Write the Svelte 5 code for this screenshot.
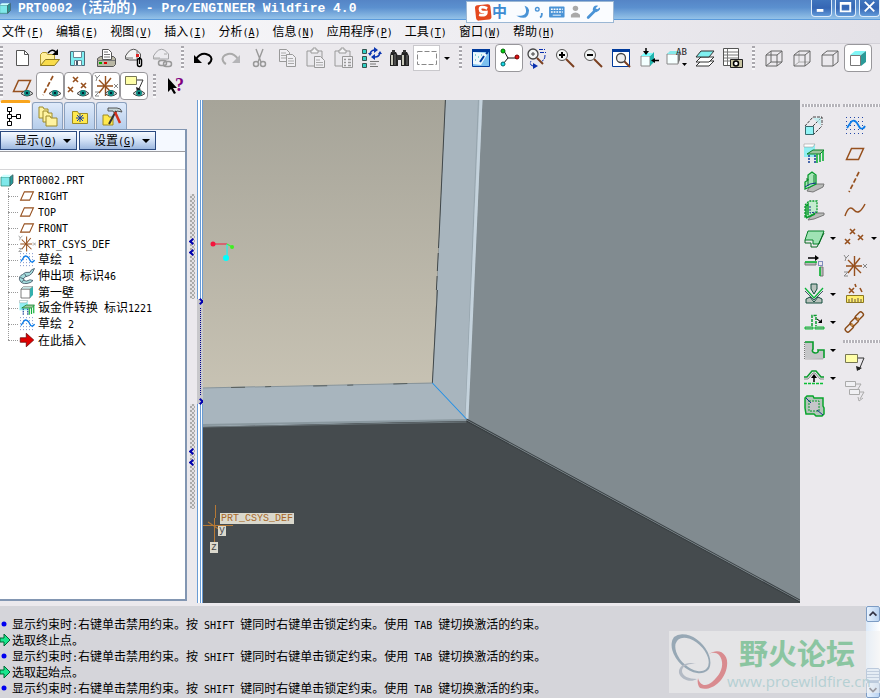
<script lang="ts">
	const eye =
		'<path d="M11 19.500q6-6 12 0q-6 5-12 0z" fill="#cfd3d3" stroke="#444"/><circle cx="17" cy="19" r="3" fill="#0b8a80"/><rect x="16" y="18" width="2" height="2" fill="#023"/>';
	const axes =
		'<g stroke="#96501e" stroke-width="1.400" fill="none"><path d="M3 12h16M11.500 2v20M5 6l13 13M17 4L5 19"/></g><g stroke="#888" fill="none"><path d="M1 1l2 3 3-3M3 4L2 7M20 10l4 4M24 10l-4 4M1 18h4l-4 4h4"/></g>';
	const points =
		'<g stroke="#96501e" stroke-width="1.600"><path d="M7 3l5 5M12 3L7 8M15 9l5 5M20 9l-5 5M2 13l5 5M7 13l-5 5"/></g>';
	const lens =
		'<path d="M13 13l8 8" stroke="#7b3f20" stroke-width="2"/><circle cx="9" cy="9" r="5.500" fill="#f4f6f6" stroke="#555"/>';
	const clipboard =
		'<path d="M4 5h15v15H4z" fill="#e9e8ec" stroke="#999"/><path d="M8 7V4h2V2h3v2h2v3z" fill="#f4f4f6" stroke="#999"/>';
	const cubeEdges = 'M4 9h11v11H4zM9 5h11v11l-5 4M4 9l5-4M15 9l5-4';

	const icons: Record<string, string> = {
		new: '<path d="M6.500 4.500h8l4 4v11h-12z" fill="#fff" stroke="#555"/><path d="M14.500 4.500v4h4" fill="none" stroke="#555"/>',
		open: '<path d="M2.500 19.500v-11l2-2h4l1 2h7v5" fill="#ffef9a" stroke="#b39a2c"/><path d="M2.500 19.500l5-6h14l-5 6z" fill="#f9dc4a" stroke="#8d7a20"/><path d="M10 7q4-5 8-1" fill="none" stroke="#000" stroke-width="1.400"/><path d="M20 3v6h-6z"/>',
		save: '<path d="M4.500 5.500h14v14h-14z" fill="#7ff0f4" stroke="#4d6a78"/><path d="M7.500 5.500h8v6h-8zM8.500 14.500h7v5h-7z" fill="#fff" stroke="#6a8694"/><path d="M10 15h2v4h-2z" fill="#456"/>',
		print: '<path d="M3.500 12.500l3-2h13l2 2v6l-2 2h-16z" fill="#b9b7a5" stroke="#555"/><path d="M8.500 3.500h6l3 3v7h-9z" fill="#fff" stroke="#555"/><path d="M10 6h4M10 8.500h6M10 11h6M3 14.500h18" stroke="#777"/><path d="M5 16h3v2H5z" fill="#0a0"/><path d="M10 16h3v2h-3z" fill="#d00"/>',
		mail: '<path d="M3.500 13v-3q5-9 11-6l4 4v6h-11z" fill="#f3f3f3" stroke="#555"/><path d="M3 12h8M15 5v9" stroke="#777"/><path d="M14 8h3v3h-3z" fill="#d22"/><rect x="15.500" y="12.500" width="4" height="8" rx="2" fill="#fff" stroke="#000" stroke-width="1.500"/><path d="M17.500 11v7" stroke="#000"/>',
		mailLink: '<path d="M3.500 13v-3q5-9 11-6l4 4v5h-11z" fill="#ecebef" stroke="#a5a5a8"/><path d="M3 12h7M14 8h3" stroke="#aaa"/><rect x="8.500" y="14.500" width="8" height="5" rx="2.500" fill="none" stroke="#999" stroke-width="1.500"/><rect x="13.500" y="15.500" width="8" height="5" rx="2.500" fill="none" stroke="#999" stroke-width="1.500"/>',
		undo: '<path d="M5 13q4-6 10-5q7 2 5 7q-1 2-3 3" fill="none" stroke="#000" stroke-width="2"/><path d="M3 9v8h8z"/>',
		redo: '<path d="M19 13q-4-6-10-5q-7 2-5 7q1 2 3 3" fill="none" stroke="#aaa" stroke-width="2"/><path d="M21 9v8h-8z" fill="#b5b5b8"/>',
		cut: '<path d="M9 3l5 13M16 3l-5 13" stroke="#999" stroke-width="1.400"/><circle cx="9" cy="18" r="2.500" fill="none" stroke="#999" stroke-width="1.500"/><circle cx="16" cy="18" r="2.500" fill="none" stroke="#999" stroke-width="1.500"/>',
		copy: '<path d="M4.500 3.500h7l3 3v9h-10z" fill="#f0eff3" stroke="#999"/><path d="M6 7h5M6 9.500h5M6 12h5" stroke="#aaa"/><path d="M11.500 8.500h6l3 3v9h-9z" fill="#f0eff3" stroke="#999"/><path d="M13 12.500h5M13 15h6M13 17.500h6" stroke="#aaa"/>',
		paste: clipboard + '<path d="M11.500 10.500h6l4 4v7h-10z" fill="#f0eff3" stroke="#999"/><path d="M13 14h4M13 16.500h7M13 19h7" stroke="#aaa"/>',
		pasteSpecial: clipboard + '<path d="M11.500 10.500h10v11h-10z" fill="#f0eff3" stroke="#999"/><path d="M13 13.500h2M17 13.500h3M13 16.500h2M17 16.500h3M13 19.500h2M17 19.500h3" stroke="#999" stroke-width="1.500"/>',
		regen: '<g fill="#30cfc4" stroke="#35524f"><path d="M3.500 3.500h4v4h-4zM3.500 10.500h4v4h-4zM3.500 17.500h4v4h-4z"/></g><path d="M11 8q1-4 5-4M21 7q-1 4-5 4" fill="none" stroke="#0a35b0" stroke-width="1.500"/><path d="M15 1l4 3-4 3zM16 8l-4 3 4 3zM9 7h4l-2 3zM19 8l2-3 2 3z" fill="#0a35b0"/><path d="M11 15.500h9M11 18h6M11 20.500h8" stroke="#777"/>',
		find: '<path d="M4 6h5l2 4v10H3V10zM15 6h5l2 4v10h-8V10z" fill="#222"/><path d="M5 4h3v3H5zM16 4h3v3h-3zM10 9h5v5h-5z" fill="#333"/><path d="M5 9v10M16 9v10" stroke="#c9c9bb" stroke-width="2"/><path d="M8 8v11M20 9v10" stroke="#777"/>',
		selectBox: '<path d="M2.500 5.500h19v13h-19z" fill="none" stroke="#888" stroke-dasharray="5 2"/>',
		repaint: '<path d="M3.500 3.500h17v17h-17z" fill="#7cc0ef" stroke="#003b9c"/><path d="M3 3h18v3H3z" fill="#003b9c"/><path d="M4 6l15 1-7 12-8-1z" fill="#eef8fd"/><path d="M15 10l-4 6M17 8l2-2" stroke="#003b9c" stroke-width="2"/><path d="M6 9h1M9 11h1M6 14h1M12 9h1" stroke="#2aa"/>',
		spin: '<path d="M7 5l4 7h9M11 12l-5 6" stroke="#111" fill="none"/><circle cx="6" cy="5" r="2" fill="#0c1" stroke="#060"/><circle cx="20" cy="11" r="2" fill="#e01010" stroke="#700"/><circle cx="6" cy="18" r="2" fill="#18d8e8" stroke="#066"/>',
		orient: '<path d="M12 12l6 6" stroke="#7b3f20" stroke-width="2"/><circle cx="8" cy="8" r="5" fill="#f4f6f6" stroke="#444" stroke-width="1.300"/><path d="M6 8h4M8 6v4" stroke="#444"/><path d="M14 3.500h6M15 6.500h6M20 9q0 5-3 6M8 20q-4-1-2-5" stroke="#0a2fae" fill="none" stroke-dasharray="4 1"/><path d="M8 17l5 3-5 3z" fill="#0a2fae"/>',
		zoomIn: lens + '<path d="M6 9h6M9 6v6" stroke="#000" stroke-width="2"/>',
		zoomOut: lens + '<path d="M6 9h6" stroke="#000" stroke-width="2"/>',
		refit: '<path d="M3.500 3.500h17v17h-17z" fill="#fff" stroke="#003b9c"/><path d="M3 3h18v3H3z" fill="#003b9c"/><path d="M15 15l6 6" stroke="#7b3f20" stroke-width="2"/><circle cx="12" cy="12" r="4.500" fill="#eee" stroke="#444" stroke-width="1.300"/>',
		reorient: '<path d="M4 10h9v10H4z" fill="#f3ffff" stroke="#888"/><path d="M13 10l4-4v10l-4 4z" fill="#21b3ad"/><path d="M4 10l3-3h9l-3 3z" fill="#7ff"/><path d="M9 2v6M22 14.500h-6" stroke="#000" stroke-width="1.500"/><path d="M6 5h6L9 9zM18 12v5l-4-2.500z"/>',
		views: '<path d="M2 8h11v10H2z" fill="#f6ffff" stroke="#888"/><path d="M2 8l3-3h10l-2 3z" fill="#84e8ea"/><path d="M13 8l2-3v9l-2 4z" fill="#777"/><text x="11" y="9" font-family="DejaVu Sans Mono, monospace" font-size="9" fill="#222">AB</text><path d="M17 17h5l-2.500 3z"/>',
		layers: '<g stroke="#333"><path d="M3 20l5-5h13l-5 5z" fill="#fff"/><path d="M3 16l5-5h13l-5 5z" fill="#fff"/><path d="M3 11l5-6h13l-5 6z" fill="#7ff0f0"/></g>',
		viewManager: '<path d="M2.500 2.500h15v17h-15z" fill="#fff" stroke="#555"/><path d="M3 6h14M3 9h14M3 12h14M3 15h14M6.500 3v16" stroke="#777"/><path d="M9.500 13.500h12v8h-12z" fill="#c9c5a3" stroke="#222"/><circle cx="15" cy="17.500" r="2.500" fill="#fff" stroke="#000" stroke-width="1.500"/>',
		wire: `<path d="${cubeEdges}M9 5v11h11M4 20l5-4" fill="none" stroke="#666"/>`,
		hidden: `<path d="M9 5v11h11M4 20l5-4" fill="none" stroke="#aaa"/><path d="${cubeEdges}" fill="none" stroke="#666"/>`,
		noHidden: `<path d="${cubeEdges}" fill="none" stroke="#666"/>`,
		shaded: '<path d="M4 9h11v11H4z" fill="#fff"/><path d="M4 9l5-4h11l-5 4z" fill="#7ff5f5"/><path d="M15 9l5-4v11l-5 4z" fill="#2b9a98"/><path d="M4.500 9.500h10v10h-10z" fill="none" stroke="#777"/>',
		planeEye: '<path d="M8.500 6.500h12l-5 11h-12z" fill="none" stroke="#96501e" stroke-width="1.500"/>' + eye,
		axisEye: '<path d="M15 2L5 21" stroke="#96501e" stroke-width="1.700" stroke-dasharray="5 2"/>' + eye,
		pointsEye: points + eye,
		csysEye: axes + eye,
		noteEye: '<path d="M3.500 2.500h11v8h-11z" fill="#ffffa8" stroke="#775"/><path d="M15 6h6l-5 11" fill="none" stroke="#333"/><path d="M14 13l1 5 4-3z" fill="#222"/>' + eye,
		help: '<path d="M5 4v14l3-3 3 5 2-1-3-5h4z"/><text x="12" y="17" font-family="Liberation Serif, serif" font-weight="bold" font-size="18" fill="#800080">?</text>',
		extrude: '<path d="M11 3h9v8M3 12l8-9M11 12l9-9M11 21l9-9" fill="none" stroke="#444" stroke-dasharray="3 1"/><path d="M11 4h8v8z" fill="#aee" opacity=".6"/><path d="M3.500 12.500h8v8h-8z" fill="#92f4f6" stroke="#35696c"/>',
		flange: '<path d="M2 2h11v13H2z" fill="#90eef2"/><path d="M2 2h11l-2 3H2z" fill="#fff" stroke="#888" stroke-width=".5"/><path d="M5 12l6-4h11l-4 4z" fill="#9cc49c" stroke="#087f27"/><path d="M18 12v8M21 9v10M15 12v9" stroke="#12b03a" stroke-width="1.600"/><path d="M7 13v9M13 13v9" stroke="#123c96" stroke-width="1.500" stroke-dasharray="2 1"/>',
		wall: '<path d="M7 18l6-4h9l-1 3-10 5-6-1z" fill="#b9bbb9" stroke="#777"/><path d="M3 19v-7l3-2V5l4-3 4 3v9l-6 3z" fill="#a8e6b8" stroke="#089a2d" stroke-width="1.300"/><path d="M5 10V8M6 16V9M12 5v9" stroke="#0a7a28"/><path d="M3 17l5-3 6-1" fill="none" stroke="#14328c"/>',
		wallDots: '<path d="M9 18l5-3h8v2l-10 4-6 1z" fill="#b9bbb9" stroke="#777"/><path d="M3 19V7l4-4h8v11l-7 4z" fill="#c4eccf" stroke="#089a2d" stroke-width="1.300" stroke-dasharray="2 1"/><path d="M4 19V8l2-2v11M4 20l9-4" fill="none" stroke="#089a2d" stroke-width="1.500"/><path d="M8 8v7l6-1" stroke="#14328c" fill="none" stroke-dasharray="2 1"/>',
		flat: '<path d="M6 5h16l-5 13h-6v-4H3z" fill="#9fe2b4" stroke="#07802a"/><path d="M3 14v3h6v4h6l7-14" fill="none" stroke="#06681f"/>',
		extend: '<path d="M6 4h9" stroke="#000" stroke-width="1.500"/><path d="M13 1l4 3-4 3z"/><path d="M3 8h11v3H3zM18 13h3v9h-3z" fill="#bbb" stroke="#777"/><path d="M3 8h12M18 13v9" stroke="#0abf35" stroke-width="1.500"/><path d="M16.500 7.500h4v4h-4z" fill="none" stroke="#14328c" stroke-dasharray="1 1"/>',
		bend: '<path d="M9 2v5l3 5 3-5V2zM4 21v-4l4-2 4 5 4-5 4 2v4z" fill="#b9c3bd" stroke="#124c3c"/><path d="M3 6l9 10 9-10" fill="none" stroke="#0bb43a" stroke-width="1.300"/><path d="M3 9l9 9 9-9" fill="none" stroke="#456"/>',
		unbend: '<path d="M3 17h8v2H3zM13 17h9v2h-9z" fill="#aaa" stroke="#0abf35"/><path d="M10 16V5.500h4V16" fill="none" stroke="#0a9a2d" stroke-width="1.500" stroke-dasharray="3 1"/><path d="M15 9l4 3" stroke="#000"/><path d="M20 9v4h-4z"/>',
		notch: '<path d="M3 20V4h8v7q-2 3 2 4q4 0 3-3h6v9" fill="#c5c6c8"/><path d="M3 4h8v7q-2 3 2 4q4 0 3-3h6v8" fill="none" stroke="#089c2b" stroke-width="1.600"/><path d="M2.500 4v17h19" fill="none" stroke="#777" stroke-dasharray="1 1"/>',
		form: '<path d="M2 11h3l5-6h4l5 6h3" fill="none" stroke="#0a9a2d" stroke-width="1.500"/><path d="M2 13h4l5-6h2l5 6h4" fill="none" stroke="#888"/><path d="M2 17.500h20" stroke="#0abf35" stroke-dasharray="3 1" stroke-width="1.500"/><path d="M12 16v-5" stroke="#000" stroke-width="1.500"/><path d="M9 12h6l-3-4z"/>',
		pattern: '<path d="M5 2h6l1 2h9v8l1 2v6l-2 2h-6l-2-2H4l-1-6V4z" fill="#b4c5bb" stroke="#08a52c" stroke-width="1.500"/><path d="M7 7h10v10H7z" fill="#c6c6ca" stroke="#089a2d" stroke-dasharray="2 1"/><path d="M4 4l5 5M15 16l6 5" stroke="#14328c"/>',
		sketch: '<g fill="none" stroke="#2247a8" stroke-dasharray="1 3"><path d="M3 3.500h19M3 7.500h19M3 11.500h19M3 15.500h19M3 19.500h19"/></g><path d="M4 14l4-6q3-3 6 1l3 5q3 2 5-2" fill="none" stroke="#0a7be8" stroke-width="1.800"/>',
		plane: '<path d="M8.500 6.500h12l-5 11h-12z" fill="none" stroke="#96501e" stroke-width="1.500"/>',
		axis: '<path d="M16 2L6 22" stroke="#96501e" stroke-width="1.700" stroke-dasharray="5 2"/>',
		curve: '<path d="M2 18q4-12 9-6t11-6" fill="none" stroke="#96501e" stroke-width="1.500"/>',
		points,
		csys: axes,
		analysis: '<path d="M6 6l5 5M11 6l-5 5M12 2l1 3M17 6l2 4" stroke="#96501e" stroke-width="1.600"/><path d="M3.500 13.500h17v7h-17z" fill="#ffef6e" stroke="#8c7920"/><path d="M6 20v-3M9 20v-4M12 20v-3M15 20v-4M18 20v-3" stroke="#654"/>',
		chain: '<g fill="none" stroke="#8a4b17" stroke-width="1.400"><rect x="12" y="3" width="9" height="5" rx="2" transform="rotate(-45 17 6)"/><rect x="7" y="9" width="9" height="5" rx="2" transform="rotate(-45 12 12)"/><rect x="2" y="15" width="9" height="5" rx="2" transform="rotate(-45 7 18)"/></g><path d="M14 10l2-2M8 16l2-2" stroke="#c89048" stroke-width="2"/>',
		note: '<path d="M2.500 4.500h12v8h-12z" fill="#ffffa8" stroke="#775"/><path d="M15 8h6l-5 12" fill="none" stroke="#333"/><path d="M13 16l1 5 5-3z" fill="#222"/>',
		noteGroup: '<g fill="#f0f0f3" stroke="#aaa"><path d="M2.500 3.500h10v5h-10zM6.500 11.500h10v5h-10z"/><path d="M13 6h5l-3 5M17 14h4l-4 7M15 19l1 4 4-3" fill="none"/></g>',
		tree: '<g fill="#fff" stroke="#000"><path d="M5.500 5v14M6 12.500h8"/><path d="M3.500 3.500h4v4h-4zM3.500 10.500h4v4h-4zM3.500 17.500h4v4h-4zM12.500 10.500h4v4h-4z"/></g>',
		folders: '<g fill="#fff3a0" stroke="#9c8a2a"><path d="M3 3h4l1 2h4v9H3z"/><path d="M7 7h4l1 2h4v9H7z"/><path d="M10 12h4l1 2h6v8H10z"/></g>',
		favourites: '<path d="M4.500 7.500h5l1 2h9v10h-15z" fill="#ffe94e" stroke="#a08c22"/><path d="M12 10v8M8 14h8M9 11l6 6M15 11l-6 6" stroke="#123cae"/>',
		tools: '<path d="M3 11h5l1 2h4v8H3z" fill="#ffe94e" stroke="#a08c22"/><path d="M8 4h9q4 0 5 4l-5-1-2 3-2-3H8z" fill="#c5d4d6" stroke="#555"/><path d="M16 7L9 20" stroke="#333" stroke-width="2"/><path d="M15 8l5 11" stroke="#d4301d" stroke-width="2.500"/>',
		part: '<path d="M4 8h12v12H4z" fill="#7fe8ea" stroke="#387"/><path d="M4 8l3-3h13l-4 3z" fill="#cff"/><path d="M16 8l4-3v11l-4 4z" fill="#269c9c" stroke="#455"/>',
		partWhite: '<path d="M4 8h12v12H4z" fill="#fff" stroke="#555"/><path d="M4 8l3-3h13l-4 3z" fill="#dff" stroke="#777"/><path d="M16 8l4-3v11l-4 4z" fill="#33b0ae"/>',
		protrusion: '<path d="M22 2q-5 1-6 5-7-1-10 3-5 2-4 7 2 6 10 5 6-1 8-4l-4-1q-5 3-8 1-2-3 2-5 6-1 9-5z" fill="#a5dcdc" stroke="#345"/><path d="M3 14l5 2M9 9l2 4M5 20l3-3" stroke="#345"/>',
		insert: '<path d="M3 9h8V3l10 9-10 9v-6H3z" fill="#e00000" stroke="#600"/>'
	};

	const menus = [
		['文件', 'F'], ['编辑', 'E'], ['视图', 'V'], ['插入', 'I'], ['分析', 'A'], ['信息', 'N'],
		['应用程序', 'P'], ['工具', 'T'], ['窗口', 'W'], ['帮助', 'H']
	];

	const fileTools = [
		['new', '新建'], ['open', '打开'], ['save', '保存'], ['print', '打印'], ['mail', '发送邮件'], ['mailLink', '发送链接']
	];
	const editTools = [
		['undo', '撤消'], ['redo', '重做'], ['cut', '剪切'], ['copy', '复制'], ['paste', '粘贴'],
		['pasteSpecial', '选择性粘贴'], ['regen', '再生'], ['find', '查找']
	];
	const viewTools = [
		['repaint', '重画'], ['spin', '旋转中心'], ['orient', '定向模式'], ['zoomIn', '放大'], ['zoomOut', '缩小'],
		['refit', '重新调整'], ['reorient', '重定向'], ['views', '视图列表'], ['layers', '层'], ['viewManager', '视图管理器']
	];
	const displayTools = [['wire', '线框'], ['hidden', '隐藏线'], ['noHidden', '无隐藏线'], ['shaded', '着色']];
	const datumTools = [
		['planeEye', '平面显示'], ['axisEye', '轴显示'], ['pointsEye', '点显示'], ['csysEye', '坐标系显示'], ['noteEye', '注释显示']
	];

	const pressed = ['spin', 'shaded', 'axisEye', 'pointsEye', 'csysEye', 'noteEye'];
	const withMenu = ['flat', 'bend', 'unbend', 'notch', 'form', 'points'];

	const sheetTools = [
		['extrude', '拉伸'], ['flange', '转换'], ['wall', '平整壁'], ['wallDots', '法兰壁'], ['flat', '平整'], ['extend', '延伸'],
		['bend', '折弯'], ['unbend', '展平'], ['notch', '凹槽'], ['form', '成形'], ['pattern', '平整形态']
	];
	const featureTools = [
		['sketch', '草绘'], ['plane', '基准平面'], ['axis', '基准轴'], ['curve', '基准曲线'], ['points', '基准点'],
		['csys', '坐标系'], ['analysis', '分析'], ['chain', '参照']
	];
	const noteTools = [['note', '注释'], ['noteGroup', '注释元素']];

	const tabs = [['tree', '模型树'], ['folders', '文件夹浏览器'], ['favourites', '收藏夹'], ['tools', '连接']];

	const features = [
		['plane', 'RIGHT'], ['plane', 'TOP'], ['plane', 'FRONT'], ['csys', 'PRT_CSYS_DEF'], ['sketch', '草绘 1'],
		['protrusion', '伸出项 标识46'], ['partWhite', '第一壁'], ['flange', '钣金件转换 标识1221'], ['sketch', '草绘 2'], ['insert', '在此插入']
	];

	const hint = '显示约束时:右键单击禁用约束。按 SHIFT 键同时右键单击锁定约束。使用 TAB 键切换激活的约束。';
	const messages = [
		{ prompt: false, text: hint },
		{ prompt: true, text: '选取终止点。' },
		{ prompt: false, text: hint },
		{ prompt: true, text: '选取起始点。' },
		{ prompt: false, text: hint }
	];

	// Latin runs are set in a smaller monospace so one letter is half a Chinese character
	function runs(text: string) {
		return text.match(/[\x20-\x7e]+|[^\x20-\x7e]+/g) ?? [];
	}
</script>

{#snippet icon(name: string)}
	<svg class="icon" viewBox="0 0 24 24" aria-hidden="true">{@html icons[name]}</svg>
{/snippet}

{#snippet mixed(text: string)}
	<span class="mixed">{#each runs(text) as run}<span class:latin={run.charCodeAt(0) < 127}>{run}</span>{/each}</span>
{/snippet}

{#snippet tools(items: string[][])}
	{#each items as [name, label]}
		<button class="tool" class:on={pressed.includes(name)} aria-label={label}>{@render icon(name)}</button>
	{/each}
{/snippet}

{#snippet sideTools(items: string[][])}
	{#each items as [name, label]}
		<div class="side-row">
			<button class="side-tool" aria-label={label}>{@render icon(name)}</button>
			{#if withMenu.includes(name)}
				<button class="drop" aria-label="{label}选项"></button>
			{/if}
		</div>
	{/each}
{/snippet}

<div class="window">
	<header class="titlebar">
		<span class="app-icon">{@render icon('part')}</span>
		<h1>{@render mixed('PRT0002 (活动的) - Pro/ENGINEER Wildfire 4.0')}</h1>
		<div class="window-buttons">
			<button aria-label="最小化"><svg viewBox="0 0 20 17"><path d="M5 11h7" stroke="#fff" stroke-width="3" /></svg></button>
			<button aria-label="最大化"><svg viewBox="0 0 20 17"><path d="M5 3h10v9H5zM5 4h10" fill="none" stroke="#fff" stroke-width="2" /></svg></button>
			<button aria-label="关闭"><svg viewBox="0 0 20 17"><path d="M5 2l10 10M15 2L5 12" stroke="#fff" stroke-width="2" /></svg></button>
		</div>
	</header>

	<div class="ime">
		<svg viewBox="0 0 148 22" aria-hidden="true">
			<rect x="3" y="3" width="17" height="17" rx="3" fill="#e4481f" transform="rotate(-6 11 11)" />
			<path d="M16 7q-8-3-8 1t7 3q0 5-8 3" fill="none" stroke="#fff" stroke-width="3" />
			<path d="M57 4q6 12-9 11q13 7 14-6q-1-4-5-5z" fill="#4a93d6" />
			<circle cx="71" cy="8" r="2" fill="none" stroke="#4a93d6" stroke-width="1.500" />
			<path d="M76 12v2q0 2-2 3" fill="none" stroke="#4a93d6" stroke-width="2" />
			<rect x="84" y="5" width="17" height="12" rx="1" fill="#4a93d6" />
			<path d="M86 8h13M86 11h13" stroke="#fff" stroke-width="1.500" stroke-dasharray="2 1" />
			<path d="M88 14.500h9" stroke="#fff" />
			<circle cx="113" cy="7" r="3" fill="#a9a9a9" />
			<path d="M108 17v-3q5-5 10 0v3z" fill="#a9a9a9" />
			<path d="M127 17l8-8" stroke="#4a93d6" stroke-width="3" stroke-linecap="round" />
			<path d="M138 4q-6-1-6 5 4 5 8-1v-2l-3 2-2-1z" fill="#4a93d6" />
		</svg>
		<span>中</span>
	</div>

	<nav class="menubar">
		{#each menus as [label, key]}
			<button>{label}<span class="latin">(<u>{key}</u>)</span></button>
		{/each}
	</nav>

	<div class="toolbar">
		<i class="grip first"></i>
		{@render tools(fileTools)}
		<i class="grip"></i>
		{@render tools(editTools)}
		<button class="tool select" aria-label="选取框">{@render icon('selectBox')}</button>
		<button class="drop" aria-label="选取选项"></button>
		<i class="grip"></i>
		{@render tools(viewTools)}
		<i class="grip"></i>
		{@render tools(displayTools)}
	</div>
	<div class="toolbar">
		<i class="grip first"></i>
		{@render tools(datumTools)}
		<i class="grip"></i>
		<button class="tool" aria-label="上下文帮助">{@render icon('help')}</button>
	</div>

	<main>
		<aside class="navigator">
			<div class="tabs">
				{#each tabs as [name, label], i}
					<button class="tab" class:active={i === 0} aria-label={label}>{@render icon(name)}</button>
				{/each}
			</div>
			<div class="panel">
				<div class="panel-buttons">
					<button>显示<span class="latin">(<u>O</u>)</span><i class="caret"></i></button>
					<button>设置<span class="latin">(<u>G</u>)</span><i class="caret"></i></button>
				</div>
				<div class="panel-head"></div>
				<div class="tree">
					<div class="node root">{@render icon('part')}{@render mixed('PRT0002.PRT')}</div>
					<ul>
						{#each features as [name, label]}
							<li class="node">{@render icon(name)}{@render mixed(label)}</li>
						{/each}
					</ul>
				</div>
			</div>
		</aside>

		<div class="splitter">
			<div class="pads">
				<button class="pad" aria-label="收起导航器"><i class="chevron"></i><i class="chevron"></i></button>
				<button class="pad" aria-label="收起面板"><i class="chevron"></i><i class="chevron"></i></button>
			</div>
			<div class="rails">
				<span class="rail"></span>
				<button class="open-pad" aria-label="展开浏览器"><i class="chevron right"></i><i class="dots"></i><i class="chevron right"></i></button>
				<span class="rail"></span>
			</div>
		</div>

		<section class="viewport" aria-label="模型">
			<svg class="model" viewBox="0 0 596 503" preserveAspectRatio="none" aria-hidden="true">
				<defs>
					<linearGradient id="back" x1="0" y1="0" x2="0" y2="1">
						<stop offset="0" stop-color="#a6a499" />
						<stop offset="1" stop-color="#c7c2b3" />
					</linearGradient>
				</defs>
				<rect width="596" height="503" fill="#454b4e" />
				<path d="M278 0H596V502L263 321z" fill="#818b90" />
				<path d="M0 287L229 283L242 0H279L264 320L0 327z" fill="#a8b5be" />
				<path d="M0 0H242L229 283L0 288z" fill="url(#back)" />
				<path d="M242 0L236 130M234 190L229 283" stroke="#41484b" fill="none" />
				<path d="M236 130l-3 60" stroke="#41484b" stroke-dasharray="18 5" />
				<path d="M0 288L229 283" stroke="#87949b" />
				<path d="M28 287.500l40-1M110 286l40-1M190 284l30-1" stroke="#59605f" stroke-dasharray="14 20" />
				<path d="M275 0L262 319" stroke="#96a5ae" />
				<path d="M277.500 0L263.500 319" stroke="#c4d2dc" stroke-width="3" />
				<path d="M0 325L263 320" stroke="#8a989f" stroke-width="2" />
				<path d="M0 327L263 322" stroke="#6c777c" />
				<path d="M263 321L596 502" stroke="#353b3e" />
				<path d="M263 319L596 500" stroke="#394044" />
				<path d="M229 283L263 319" stroke="#1d8ee8" />
				<path d="M10 144h14" stroke="#f4143c" /><circle cx="10" cy="144" r="2.500" fill="#f4143c" />
				<path d="M24 144v14" stroke="#0ff" /><circle cx="23" cy="158" r="3" fill="#0ff" />
				<path d="M24 144l5 3" stroke="#3f3" /><circle cx="29" cy="147" r="2" fill="#3fef20" />
				<path d="M12.500 405v13M11.500 418v28M0 425.500h30M5 422l12 8" stroke="#b87a35" fill="none" />
			</svg>
			<span class="tag csys-name">PRT_CSYS_DEF</span>
			<span class="tag axis-y">y</span>
			<span class="tag axis-z">z</span>
		</section>

		<div class="side">
			<div class="side-column">
				<i class="line"></i>
				{@render sideTools(sheetTools)}
			</div>
			<div class="side-column">
				<i class="line"></i>
				{@render sideTools(featureTools)}
				<i class="line"></i>
				{@render sideTools(noteTools)}
			</div>
		</div>
	</main>

	<footer class="status">
		<ul class="messages">
			{#each messages as message}
				<li>
					<svg viewBox="0 0 12 16" aria-hidden="true">
						{#if message.prompt}
							<path d="M0 6h4V2l6 6-6 6v-4H0z" fill="#18e58d" stroke="#063" />
						{:else}
							<circle cx="4" cy="8" r="2.500" fill="#0000f0" />
						{/if}
					</svg>
					{@render mixed(message.text)}
				</li>
			{/each}
		</ul>
		<div class="scrollbar">
			<button aria-label="向上滚动"><svg viewBox="0 0 14 16"><path d="M3 10l4-4 4 4" /></svg></button>
			<span class="track"></span>
			<span class="thumb"></span>
			<button aria-label="向下滚动"><svg viewBox="0 0 14 16"><path d="M3 6l4 4 4-4" /></svg></button>
		</div>
		<div class="watermark">
			<svg viewBox="0 0 60 62" aria-hidden="true">
				<path d="M5 6A24 16 46 0 1 40 38A23 15 46 0 1 5 6zM8 10A20 12 45 0 0 38 37A20 12 45 0 0 8 10z" fill="#97a8b5" fill-rule="evenodd" />
				<path d="M40 23C50 16 60 23 58 35C56 50 42 61 31 57C29 55 28 51 29 47C31 55 37 56 43 51C50 45 54 38 53 31C52 23 46 20 40 23z" fill="#d98b8f" />
				<path d="M27 33C18 30 9 35 10 42C12 49 22 52 28 48C20 48 13 45 13 40C13 35 20 32 27 33z" fill="#b3bac4" />
			</svg>
			<div>
				<strong>野火论坛</strong>
				<span>www.proewildfire.cn</span>
			</div>
		</div>
	</footer>
</div>

<style>
	:global(body) {
		margin: 0;
		background: #ebe9ed;
	}

	.window {
		position: relative;
		display: flex;
		flex-direction: column;
		min-height: 100vh;
		background: #ebe9ed;
		color: #000;
		font-family: "Noto Sans CJK SC", sans-serif;
		font-size: 12px;
		line-height: 16px;
	}

	button {
		padding: 0;
		border: 0;
		background: none;
		color: inherit;
		font: inherit;
	}

	ul {
		list-style: none;
		margin: 0;
		padding: 0;
	}

	svg {
		display: block;
		flex: none;
	}

	.icon {
		width: 24px;
		height: 24px;
	}

	.mixed {
		white-space: pre;
	}

	.latin {
		font-family: "DejaVu Sans Mono", monospace;
		font-size: 10px;
		white-space: pre;
	}

	/* Title bar */
	.titlebar {
		display: flex;
		align-items: flex-start;
		height: 19px;
		background: linear-gradient(#5585c6, #5b90cf 40%, #94c2e8);
		border-bottom: 1px solid #5b9bdc;
		color: #fff;
	}

	.app-icon {
		width: 18px;
	}

	.app-icon .icon {
		width: 16px;
		height: 16px;
		margin-left: -3px;
	}

	h1 {
		flex: 1;
		margin: 0;
		font-size: 14px;
		font-weight: 700;
		line-height: 12px;
		white-space: nowrap;
	}

	h1 .latin {
		font-family: "Liberation Mono", monospace;
		font-size: 13px;
	}

	.window-buttons {
		display: flex;
		gap: 3px;
	}

	.window-buttons button {
		box-sizing: border-box;
		width: 21px;
		height: 17px;
		border: 1px solid #dcebfa;
		border-top: 0;
		border-radius: 0 0 4px 4px;
		background: linear-gradient(#3f74bd, #3566b4 50%, #6199d8);
	}

	.ime {
		position: absolute;
		top: 1px;
		left: 466px;
		width: 146px;
		height: 20px;
		border: 1px solid #9bb7d4;
		background: #fafcff;
		color: #3d8bd2;
		font-size: 15px;
		font-weight: 700;
		line-height: 18px;
	}

	.ime svg {
		width: 100%;
		height: 100%;
	}

	.ime span {
		position: absolute;
		top: 0;
		left: 25px;
	}

	/* Menus and toolbars */
	.menubar {
		display: flex;
		align-items: center;
		gap: 12px;
		height: 23px;
		padding-left: 2px;
		background: linear-gradient(90deg, #fbfbfd, #e3e1e7);
		border-bottom: 1px solid #d3d1d8;
		line-height: 18px;
		white-space: nowrap;
	}

	.toolbar {
		display: flex;
		align-items: center;
		height: 28px;
	}

	.tool {
		display: grid;
		place-items: center;
		box-sizing: border-box;
		width: 28px;
		height: 28px;
		border: 1px solid transparent;
		border-radius: 4px;
	}

	.tool.on {
		border-color: #98979b;
		background: #fff;
	}

	.tool.select {
		width: 27px;
		height: 26px;
		border: 1px solid #c9c8cc;
		border-radius: 0;
		background: #fff;
	}

	.drop {
		width: 14px;
		height: 20px;
	}

	.drop::before,
	.caret {
		content: "";
		display: block;
		width: 0;
		margin: auto;
		border: 3px solid transparent;
		border-top-color: #000;
		border-bottom: 0;
	}

	.grip {
		width: 3px;
		height: 24px;
		margin: 0 5px;
		background: repeating-linear-gradient(#a9a7ad 0 2px, #f8f8fa 2px 4px);
	}

	.grip.first {
		margin: 0 5px 0 0;
	}

	/* Navigator */
	main {
		display: flex;
		flex: 1;
		min-height: 480px;
	}

	.navigator {
		display: flex;
		flex-direction: column;
		width: 187px;
		padding-bottom: 2px;
	}

	.tabs {
		display: flex;
		align-items: flex-end;
		gap: 1px;
		height: 29px;
	}

	.tab {
		display: grid;
		place-items: center;
		box-sizing: border-box;
		width: 31px;
		height: 27px;
		border: 1px solid #8ba0bd;
		border-bottom: 0;
		border-radius: 3px 3px 0 0;
		background: linear-gradient(#dfeafa, #b5cdeb);
	}

	.tab.active {
		height: 29px;
		border-color: #fff;
		border-top: 3px solid #f9a51d;
		background: #fff;
	}

	.panel {
		flex: 1;
		border: 2px solid #8296b2;
		border-width: 1px 2px 2px 0;
		background: #fff;
	}

	.panel-buttons {
		display: flex;
		gap: 2px;
		padding: 1px 0;
		border-bottom: 1px solid #9c9ca0;
		background: #f5f9ff;
	}

	.panel-buttons button {
		display: flex;
		align-items: baseline;
		justify-content: flex-end;
		box-sizing: border-box;
		width: 77px;
		height: 19px;
		padding-right: 5px;
		border: 1px solid #2b4a80;
		background: linear-gradient(#f6faff, #cfdff5 50%, #9db8df);
	}

	.panel-buttons .caret {
		align-self: center;
		margin: 0 0 0 6px;
		border-width: 4px;
		border-bottom: 0;
	}

	.panel-head {
		height: 17px;
		border-bottom: 1px solid #d6d6d8;
	}

	.tree {
		padding-top: 2px;
	}

	.node {
		display: flex;
		align-items: center;
		height: 16px;
	}

	.node .icon {
		width: 18px;
		height: 18px;
		margin-right: 2px;
	}

	.root .icon {
		margin-left: -2px;
	}

	.tree ul {
		position: relative;
		padding-left: 8px;
	}

	.tree ul::before {
		content: "";
		position: absolute;
		top: 0;
		bottom: 8px;
		left: 8px;
		border-left: 1px dotted #999;
	}

	.tree li::before {
		content: "";
		width: 10px;
		border-top: 1px dotted #999;
	}

	/* Splitter */
	.splitter {
		display: flex;
		width: 16px;
	}

	.pads {
		display: flex;
		flex-direction: column;
		justify-content: center;
		gap: 105px;
		width: 10px;
	}

	.pad {
		display: flex;
		flex-direction: column;
		align-items: center;
		justify-content: center;
		gap: 6px;
		width: 5px;
		height: 105px;
		margin-left: 3px;
		background: repeating-conic-gradient(#aaa 0 25%, #e2e0e4 0 50%) 0 0 / 4px 4px;
	}

	.chevron {
		width: 3px;
		height: 3px;
		border: solid #0000b0;
		border-width: 0 0 2px 2px;
		transform: rotate(45deg);
	}

	.chevron.right {
		transform: rotate(225deg);
	}

	.rails {
		display: flex;
		flex-direction: column;
		width: 6px;
	}

	.rail {
		flex: 1;
		border: solid #6a9cd4;
		border-width: 0 1px;
		background: linear-gradient(90deg, #fff 2px, #6a9cd4 2px 3px, #fff 3px);
	}

	.open-pad {
		display: flex;
		flex-direction: column;
		align-items: center;
		justify-content: space-between;
		height: 105px;
		background: #c8c8cb;
	}

	.dots {
		flex: 1;
		margin: 4px 0;
		border-left: 1px dotted #00008c;
	}

	/* Model view */
	.viewport {
		position: relative;
		flex: 1;
		min-width: 0;
		margin-right: 2px;
	}

	.model {
		position: absolute;
		inset: 0;
		width: 100%;
		height: 100%;
	}

	.tag {
		position: absolute;
		padding: 0 1px;
		background: #dad8cc;
		color: #444;
		font-family: "Liberation Mono", monospace;
		font-size: 10px;
		line-height: 11px;
	}

	.csys-name {
		left: 17px;
		bottom: 79px;
		color: #a8692a;
	}

	.axis-y {
		left: 15px;
		bottom: 67px;
		line-height: 10px;
	}

	.axis-z {
		left: 7px;
		bottom: 50px;
	}

	/* Feature toolbars */
	.side {
		display: flex;
		gap: 3px;
		width: 78px;
	}

	.side-column {
		display: flex;
		flex-direction: column;
		width: 38px;
		padding-top: 4px;
	}

	.line {
		height: 3px;
		margin-bottom: 5px;
		background: repeating-linear-gradient(90deg, #b5b3b9 0 2px, #f8f8fa 2px 3px);
	}

	.side-row + .line {
		margin-top: 4px;
	}

	.side-row {
		display: flex;
		align-items: center;
		height: 28px;
	}

	/* Messages */
	.status {
		position: relative;
		display: flex;
		min-height: 92px;
		margin-top: 3px;
		background: #d5d5da;
	}

	.messages {
		flex: 1;
		padding-top: 10px;
	}

	.messages li {
		display: flex;
		height: 16px;
	}

	.messages svg {
		width: 12px;
		height: 16px;
	}

	.scrollbar {
		display: flex;
		flex-direction: column;
		width: 14px;
		background: linear-gradient(90deg, #dbeafa, #fff);
	}

	.scrollbar button,
	.thumb {
		box-sizing: border-box;
		height: 16px;
		border: 1px solid #7d9cc4;
		border-radius: 2px;
		background: linear-gradient(90deg, #e8f3ff, #b9d2f0);
	}

	.scrollbar path {
		fill: none;
		stroke: #334;
		stroke-width: 2;
	}

	.track {
		flex: 1;
	}

	.thumb {
		height: 14px;
		background: repeating-linear-gradient(#d7e8fb 0 2px, #8aa5c8 2px 3px);
	}

	.watermark {
		position: absolute;
		right: 0;
		bottom: 5px;
		display: flex;
		width: 211px;
		height: 62px;
		background: rgba(240, 240, 240, 0.55);
		color: #8bc5a1;
		white-space: nowrap;
		pointer-events: none;
	}

	.watermark svg {
		width: 60px;
		height: 62px;
	}

	.watermark strong {
		display: block;
		margin-left: 10px;
		font-size: 29px;
		line-height: 42px;
	}

	.watermark span {
		display: block;
		margin-left: -2px;
		color: #b5d0d3;
		font-family: "Open Sans", sans-serif;
		font-size: 15px;
		line-height: 16px;
	}
</style>
